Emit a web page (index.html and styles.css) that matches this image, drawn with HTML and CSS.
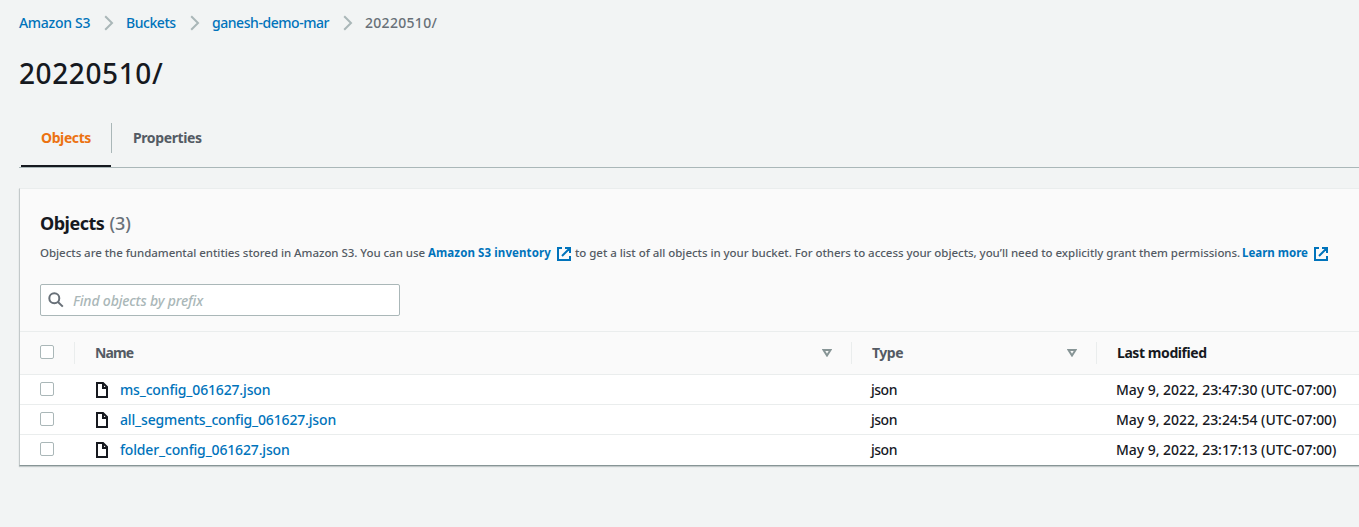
FILE: index.html
```html
<!DOCTYPE html>
<html lang="en">
<head>
<meta charset="utf-8">
<title>20220510/ - S3 bucket</title>
<link rel="stylesheet" href="styles.css">
</head>
<body>
<svg class="defs" width="0" height="0">
  <symbol id="chevron" viewBox="0 0 10 16"><path d="M1.200 1.200 8 8l-6.800 6.800" fill="none" stroke="#aab7b8" stroke-width="2"/></symbol>
  <symbol id="external" viewBox="0 0 14 14"><path d="M5 1H1v12h12V9M8 1h5v5M13 1 5 9" fill="none" stroke="#0073bb" stroke-width="2"/></symbol>
  <symbol id="file" viewBox="0 0 12 16"><path d="M1 1h6l4 4v10H1zM7 1v5h4" fill="none" stroke="#16191f" stroke-width="2"/></symbol>
  <symbol id="sort" viewBox="0 0 10 8"><path d="M1.500 1h7L5 6.500z" fill="none" stroke="#879596" stroke-width="2"/></symbol>
</svg>
<nav class="crumbs">
  <a class="c1">Amazon S3</a><svg class="chev"><use href="#chevron"/></svg>
  <a class="c2">Buckets</a><svg class="chev"><use href="#chevron"/></svg>
  <a class="c3">ganesh-demo-mar</a><svg class="chev"><use href="#chevron"/></svg>
  <span>20220510/</span>
</nav>
<h1><span>20220510/</span></h1>
<div class="tabs">
  <div class="tab active"><span>Objects</span></div>
  <div class="tab divided"><span>Properties</span></div>
</div>
<main class="card">
  <header>
    <h2><span class="title">Objects</span> <span class="count">(3)</span></h2>
    <p class="desc"><span class="d1">Objects are the fundamental entities stored in Amazon S3. You can use</span><a class="l1">Amazon S3 inventory</a><svg class="ext"><use href="#external"/></svg><span class="d2">to get a list of all objects in your bucket. For others to access your objects, you’ll need to explicitly grant them permissions.</span><a class="l2">Learn more</a><svg class="ext"><use href="#external"/></svg></p>
    <div class="search"><svg viewBox="0 0 16 16"><circle cx="6.300" cy="6.300" r="5" fill="none" stroke="#687078" stroke-width="2"/><path d="m10 10 4.800 4.600" stroke="#687078" stroke-width="2"/></svg><span>Find objects by prefix</span></div>
  </header>
  <div class="row head">
    <div class="check"><i></i></div>
    <div class="name"><b>Name</b><svg class="sort"><use href="#sort"/></svg></div>
    <div class="type"><b>Type</b><svg class="sort"><use href="#sort"/></svg></div>
    <div class="date"><b>Last modified</b></div>
  </div>
  <div class="row">
    <div class="check"><i></i></div>
    <div class="name"><svg class="file"><use href="#file"/></svg><a>ms_config_061627.json</a></div>
    <div class="type"><span>json</span></div>
    <div class="date"><span>May 9, 2022, 23:47:30 (UTC-07:00)</span></div>
  </div>
  <div class="row">
    <div class="check"><i></i></div>
    <div class="name"><svg class="file"><use href="#file"/></svg><a>all_segments_config_061627.json</a></div>
    <div class="type"><span>json</span></div>
    <div class="date"><span>May 9, 2022, 23:24:54 (UTC-07:00)</span></div>
  </div>
  <div class="row">
    <div class="check"><i></i></div>
    <div class="name"><svg class="file"><use href="#file"/></svg><a>folder_config_061627.json</a></div>
    <div class="type"><span>json</span></div>
    <div class="date"><span>May 9, 2022, 23:17:13 (UTC-07:00)</span></div>
  </div>
</main>
</body>
</html>
```
FILE: styles.css
```css
* { box-sizing: border-box; }
body {
  margin: 0;
  height: 527px;
  overflow: hidden;
  padding-left: 19px;
  background: #f2f4f4;
  color: #16191f;
  font: 500 14px/20px "Noto Sans", "Open Sans", sans-serif;
  white-space: nowrap;
}
.defs { position: absolute; }
svg { display: block; flex: none; }
a { color: #0073bb; }

.crumbs { display: flex; align-items: center; height: 46px; letter-spacing: -0.45px; color: #687078; }
.crumbs span { letter-spacing: 0.3px; }
.chev { width: 10px; height: 16px; }
.c1 { width: 85px; letter-spacing: -0.3px; }
.chev + a, .chev + span { margin-left: 12px; }
.c2 { width: 63px; margin-right: 1px; }
.c3 { width: 131px; }

h1 { margin: 9px 0 0; height: 36px; font-size: 28px; line-height: 36px; font-weight: 500; letter-spacing: 0.6px; }

.tabs { display: flex; height: 45px; margin-top: 32px; padding-left: 2px; border-bottom: 1px solid #aab7b8; font-weight: 700; color: #545b64; letter-spacing: -0.4px; }
.tab { display: flex; height: 45px; padding: 5px 20px 0; line-height: 20px; }
.tab.active { width: 90px; height: 44px; color: #ec7211; border-bottom: 2px solid #16191f; }
.tab.divided { height: 30px; padding: 5px 0 0 21px; border-left: 1px solid #aab7b8; }

.card { margin-top: 20px; height: 278px; border-left: 1px solid #c3c9ca; border-top: 1px solid #eaeded; border-bottom: 1px solid #879596; background: #fff; box-shadow: 0 1px 1px #c3c9ca; }
header { height: 143px; padding: 23px 0 0 20px; background: #fafafa; border-bottom: 1px solid #eaeded; }
h2 { display: flex; margin: 0; font-size: 18px; line-height: 22px; letter-spacing: -0.5px; }
.count { margin-left: 5px; font-weight: 500; color: #687078; letter-spacing: 0; }
.desc { display: flex; align-items: center; margin: 9px 0 0; height: 20px; font-size: 11.500px; letter-spacing: -0.045px; color: #545b64; }
.desc a { font-weight: 700; }
.d1 { width: 388px; }
.l1 { width: 129px; letter-spacing: 0.1px; }
.d2 { width: 664px; margin: 0 3px 0 4px; }
.l2 { width: 72px; letter-spacing: 0; }
.ext { width: 14px; height: 14px; margin-top: 2px; }
.search { display: flex; align-items: center; width: 360px; height: 32px; margin-top: 21px; padding-left: 7px; border: 1px solid #aab7b8; border-radius: 2px; background: #fff; font-style: italic; color: #aab7b8; letter-spacing: -0.17px; }
.search svg { width: 16px; height: 16px; margin-right: 9px; }
.search span { padding-top: 2px; }

.row { display: flex; align-items: center; height: 30px; border-bottom: 1px solid #eaeded; }
.row:last-child { border: 0; }
.row > div { display: flex; align-items: center; }
.check { width: 75px; padding-left: 20px; }
.check i { width: 14px; height: 14px; margin-top: -2px; border: 1px solid #aab7b8; border-radius: 2px; background: #fff; }
.name { width: 776px; letter-spacing: -0.16px; }
.type { width: 245px; letter-spacing: -0.5px; }
.date { flex: 1; letter-spacing: -0.05px; }
.file { width: 12px; height: 16px; margin-right: 12px; margin-left: 1px; }
.head { height: 43px; background: #fafafa; color: #545b64; }
.head > div { height: 22px; }
.head .check { width: 55px; border-right: 1px solid #eaeded; }
.head .check i { margin-top: -3px; }
.head .name { width: 777px; padding: 0 19px 0 20px; justify-content: space-between; border-right: 1px solid #eaeded; letter-spacing: -0.9px; }
.head .type { padding: 0 19px 0 20px; justify-content: space-between; border-right: 1px solid #eaeded; }
.head .date { padding-left: 20px; color: #16191f; letter-spacing: -0.42px; }
.sort { width: 10px; height: 8px; }
```
